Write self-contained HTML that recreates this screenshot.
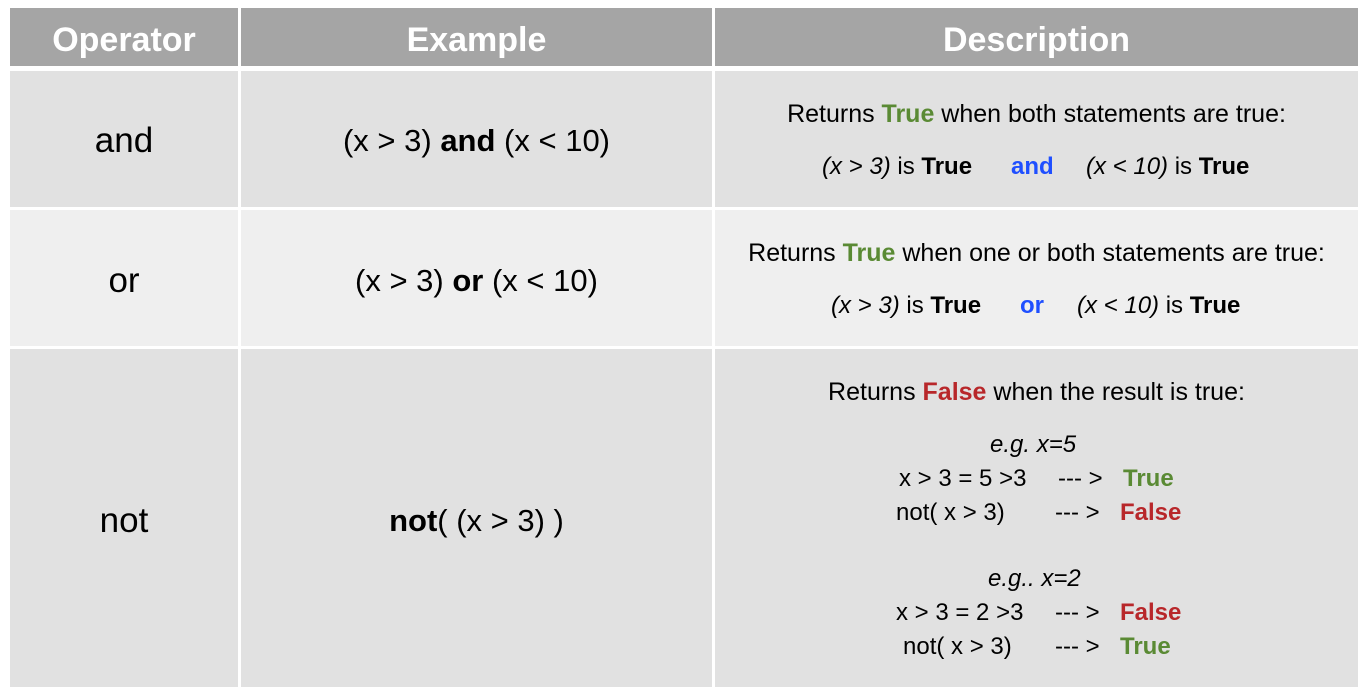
<!DOCTYPE html>
<html><head><meta charset="utf-8"><style>
body{margin:0;width:1366px;height:696px;background:#fff;position:relative;overflow:hidden;font-family:"Liberation Sans",sans-serif;color:#000}
.c{position:absolute}
.t{position:absolute;white-space:nowrap;line-height:1}
.ctr{text-align:center}
.g{color:#5a8a34;font-weight:bold}
.r{color:#b8272a;font-weight:bold}
.b{color:#1f4fff;font-weight:bold}
.d{font-size:24px}
</style></head><body>
<div class="c" style="left:10px;top:8px;width:228px;height:58px;background:#a5a5a5"></div>
<div class="c" style="left:241px;top:8px;width:471px;height:58px;background:#a5a5a5"></div>
<div class="c" style="left:715px;top:8px;width:643px;height:58px;background:#a5a5a5"></div>
<div class="c" style="left:10px;top:71px;width:228px;height:136px;background:#e1e1e1"></div>
<div class="c" style="left:241px;top:71px;width:471px;height:136px;background:#e1e1e1"></div>
<div class="c" style="left:715px;top:71px;width:643px;height:136px;background:#e1e1e1"></div>
<div class="c" style="left:10px;top:210px;width:228px;height:136px;background:#efefef"></div>
<div class="c" style="left:241px;top:210px;width:471px;height:136px;background:#efefef"></div>
<div class="c" style="left:715px;top:210px;width:643px;height:136px;background:#efefef"></div>
<div class="c" style="left:10px;top:349px;width:228px;height:338px;background:#e1e1e1"></div>
<div class="c" style="left:241px;top:349px;width:471px;height:338px;background:#e1e1e1"></div>
<div class="c" style="left:715px;top:349px;width:643px;height:338px;background:#e1e1e1"></div>

<div class="t ctr" style="left:10px;width:228px;top:23px;font-size:34px;font-weight:bold;color:#fff">Operator</div>
<div class="t ctr" style="left:241px;width:471px;top:23px;font-size:34px;font-weight:bold;color:#fff">Example</div>
<div class="t ctr" style="left:715px;width:643px;top:23px;font-size:34px;font-weight:bold;color:#fff">Description</div>

<div class="t ctr" style="left:10px;width:228px;top:123px;font-size:35px">and</div>
<div class="t ctr" style="left:10px;width:228px;top:263px;font-size:35px">or</div>
<div class="t ctr" style="left:10px;width:228px;top:503px;font-size:35px">not</div>

<div class="t ctr" style="left:241px;width:471px;top:125px;font-size:31px">(x &gt; 3) <b>and</b> (x &lt; 10)</div>
<div class="t ctr" style="left:241px;width:471px;top:265px;font-size:31px">(x &gt; 3) <b>or</b> (x &lt; 10)</div>
<div class="t ctr" style="left:241px;width:471px;top:505px;font-size:31px"><b>not</b>( (x &gt; 3) )</div>

<div class="t ctr" style="left:715px;width:643px;top:102px;font-size:25px">Returns <span class="g">True</span> when both statements are true:</div>
<div class="t d" style="left:822px;top:155px"><i>(x &gt; 3)</i> is <b>True</b></div>
<div class="t b d" style="left:1011px;top:155px">and</div>
<div class="t d" style="left:1086px;top:155px"><i>(x &lt; 10)</i> is <b>True</b></div>

<div class="t ctr" style="left:715px;width:643px;top:241px;font-size:25px">Returns <span class="g">True</span> when one or both statements are true:</div>
<div class="t d" style="left:831px;top:294px"><i>(x &gt; 3)</i> is <b>True</b></div>
<div class="t b d" style="left:1020px;top:294px">or</div>
<div class="t d" style="left:1077px;top:294px"><i>(x &lt; 10)</i> is <b>True</b></div>

<div class="t ctr" style="left:715px;width:643px;top:380px;font-size:25px">Returns <span class="r">False</span> when the result is true:</div>
<div class="t d" style="left:990px;top:433px"><i>e.g. x=5</i></div>
<div class="t d" style="left:899px;top:467px">x &gt; 3 = 5 &gt;3</div>
<div class="t d" style="left:1058px;top:467px">--- &gt;</div>
<div class="t g d" style="left:1123px;top:467px">True</div>
<div class="t d" style="left:896px;top:501px">not( x &gt; 3)</div>
<div class="t d" style="left:1055px;top:501px">--- &gt;</div>
<div class="t r d" style="left:1120px;top:501px">False</div>
<div class="t d" style="left:988px;top:567px"><i>e.g.. x=2</i></div>
<div class="t d" style="left:896px;top:601px">x &gt; 3 = 2 &gt;3</div>
<div class="t d" style="left:1055px;top:601px">--- &gt;</div>
<div class="t r d" style="left:1120px;top:601px">False</div>
<div class="t d" style="left:903px;top:635px">not( x &gt; 3)</div>
<div class="t d" style="left:1055px;top:635px">--- &gt;</div>
<div class="t g d" style="left:1120px;top:635px">True</div>
</body></html>
